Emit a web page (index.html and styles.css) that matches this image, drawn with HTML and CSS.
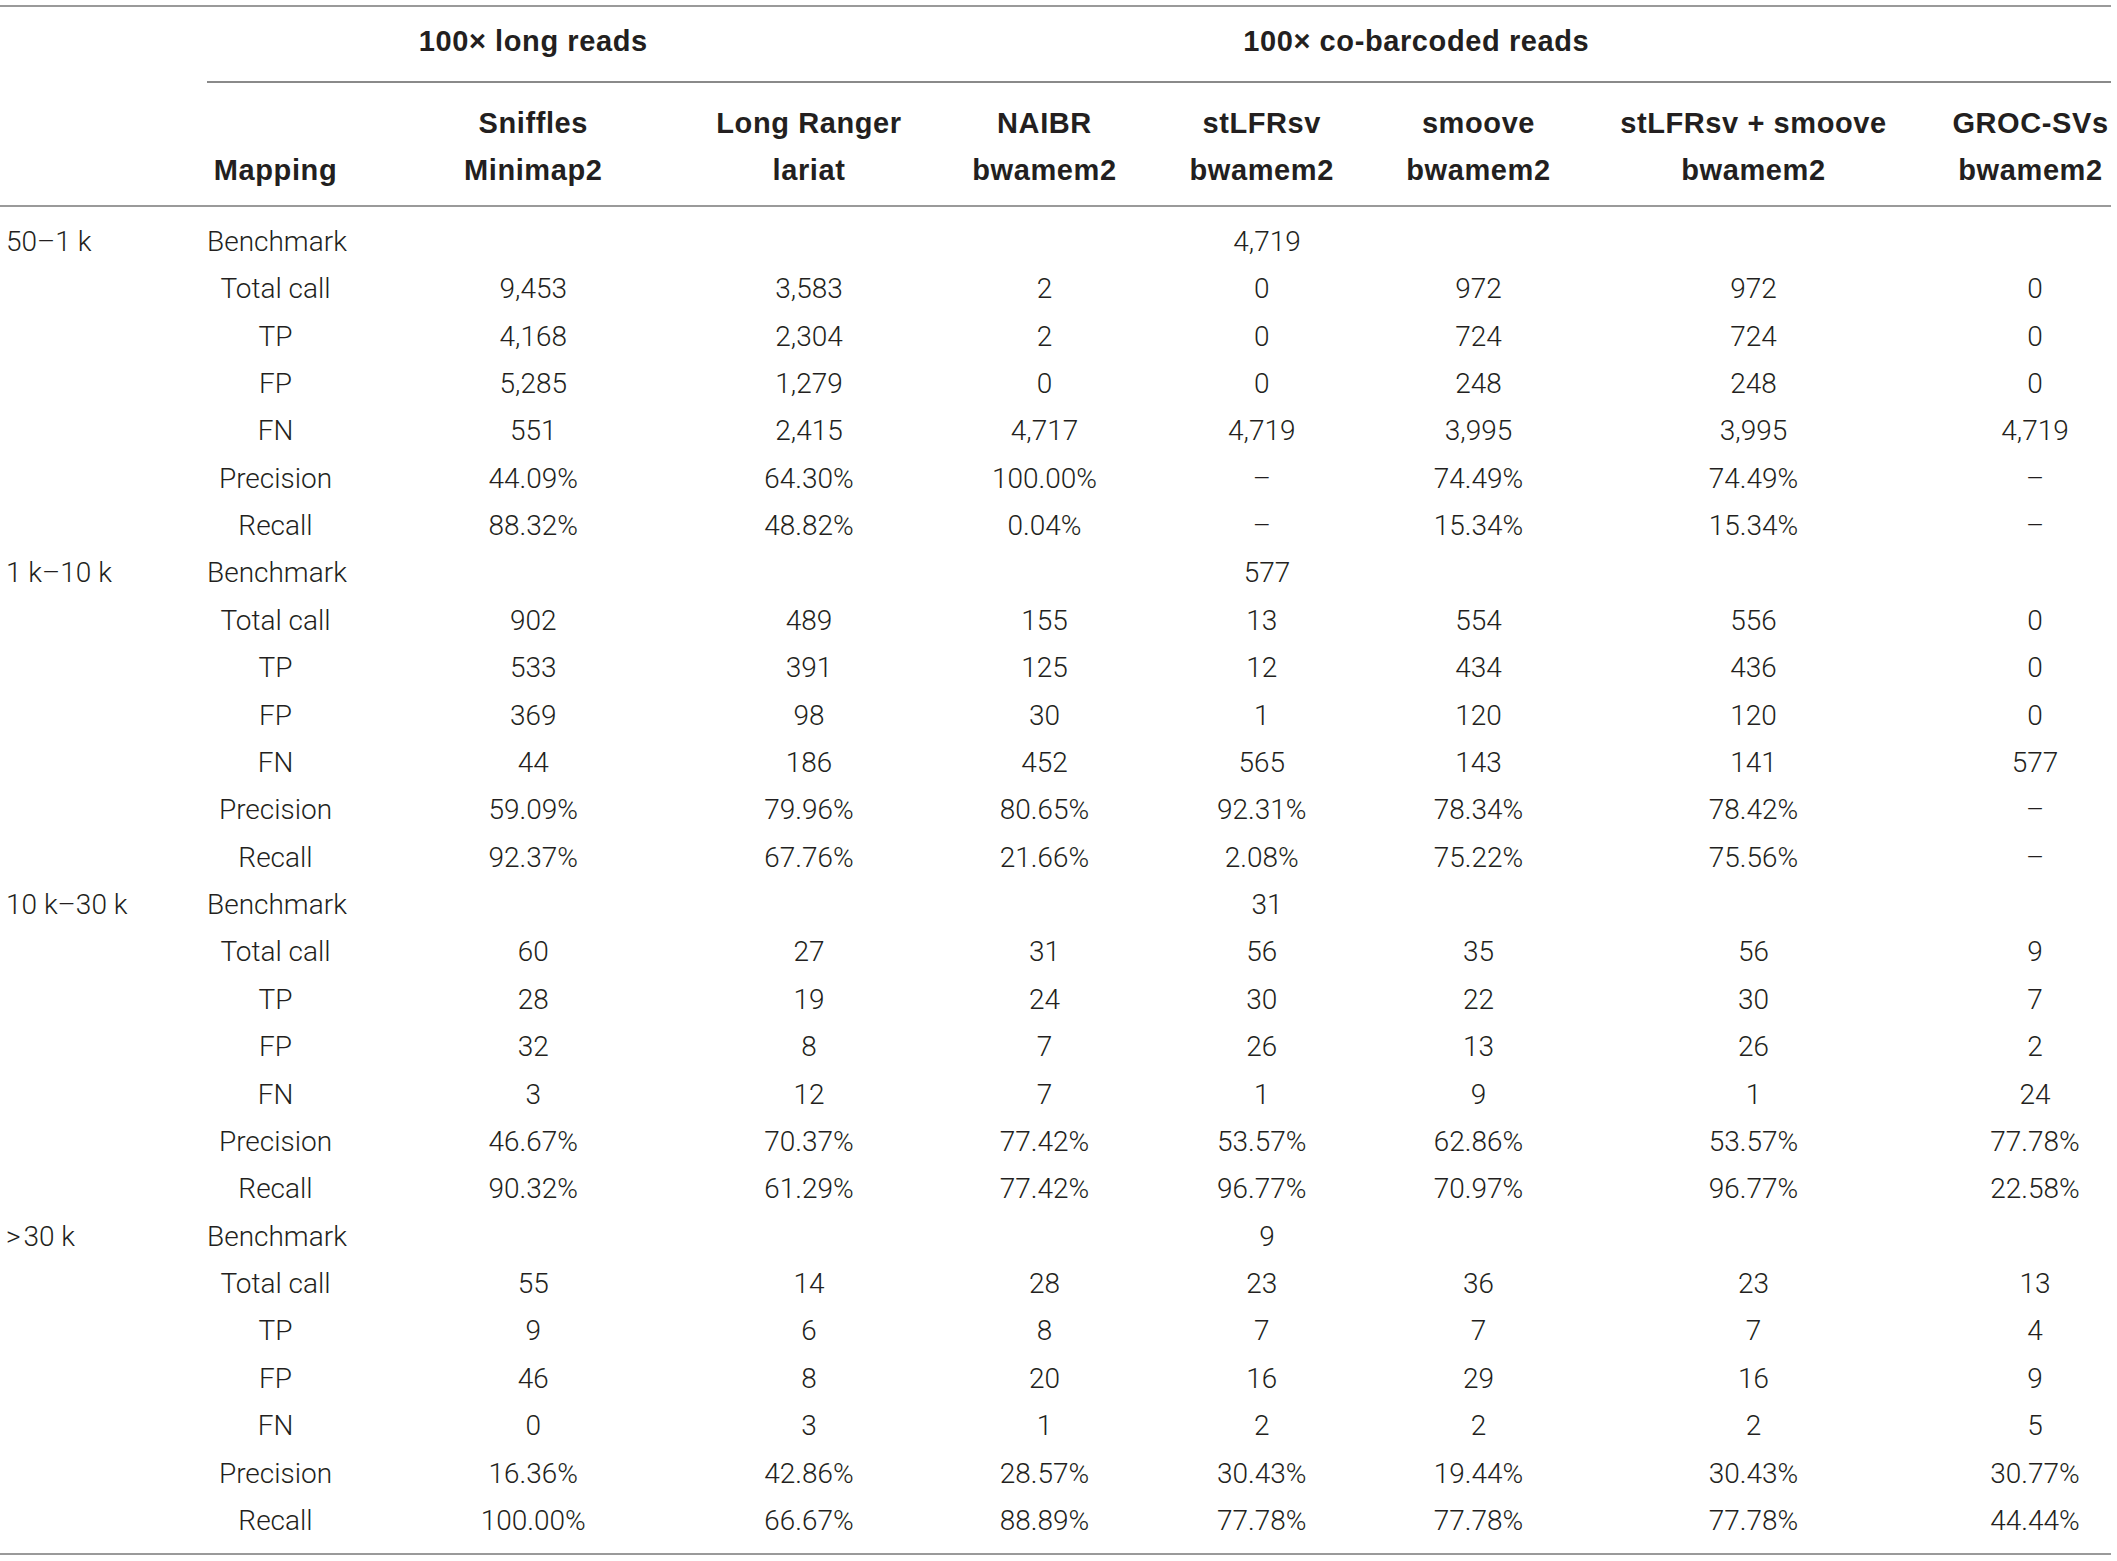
FILE: index.html
```html
<!DOCTYPE html>
<html lang="en">
<head>
  <meta charset="UTF-8" />
  <title>SV calling benchmark</title>
  <link rel="stylesheet" href="styles.css">
</head>
<body>
  <table class="tabela">
    <colgroup>
      <col class="c-faixa">
      <col class="c-map">
      <col class="c-sniffles">
      <col class="c-ranger">
      <col class="c-naibr">
      <col class="c-stlfr">
      <col class="c-smoove">
      <col class="c-combo">
      <col class="c-groc">
    </colgroup>
    <thead>
      <tr class="grupo">
        <th></th>
        <th class="com-linha"></th>
        <th class="com-linha">100× long reads</th>
        <th class="com-linha" colspan="6">100× co-barcoded reads</th>
      </tr>
      <tr class="colunas">
        <th></th>
        <th class="mapeamento">Mapping</th>
        <th>Sniffles<br>Minimap2</th>
        <th>Long Ranger<br>lariat</th>
        <th>NAIBR<br>bwamem2</th>
        <th>stLFRsv<br>bwamem2</th>
        <th>smoove<br>bwamem2</th>
        <th>stLFRsv + smoove<br>bwamem2</th>
        <th>GROC-SVs<br>bwamem2</th>
      </tr>
    </thead>
    <tbody id="corpo">
      <!-- linhas montadas pelo script -->
    </tbody>
  </table>

  <script>
    const secoes = [
      {
        faixa: '50–1 k', benchmark: '4,719',
        linhas: [
          ['Total call', '9,453', '3,583', '2', '0', '972', '972', '0'],
          ['TP', '4,168', '2,304', '2', '0', '724', '724', '0'],
          ['FP', '5,285', '1,279', '0', '0', '248', '248', '0'],
          ['FN', '551', '2,415', '4,717', '4,719', '3,995', '3,995', '4,719'],
          ['Precision', '44.09%', '64.30%', '100.00%', '–', '74.49%', '74.49%', '–'],
          ['Recall', '88.32%', '48.82%', '0.04%', '–', '15.34%', '15.34%', '–']
        ]
      },
      {
        faixa: '1 k–10 k', benchmark: '577',
        linhas: [
          ['Total call', '902', '489', '155', '13', '554', '556', '0'],
          ['TP', '533', '391', '125', '12', '434', '436', '0'],
          ['FP', '369', '98', '30', '1', '120', '120', '0'],
          ['FN', '44', '186', '452', '565', '143', '141', '577'],
          ['Precision', '59.09%', '79.96%', '80.65%', '92.31%', '78.34%', '78.42%', '–'],
          ['Recall', '92.37%', '67.76%', '21.66%', '2.08%', '75.22%', '75.56%', '–']
        ]
      },
      {
        faixa: '10 k–30 k', benchmark: '31',
        linhas: [
          ['Total call', '60', '27', '31', '56', '35', '56', '9'],
          ['TP', '28', '19', '24', '30', '22', '30', '7'],
          ['FP', '32', '8', '7', '26', '13', '26', '2'],
          ['FN', '3', '12', '7', '1', '9', '1', '24'],
          ['Precision', '46.67%', '70.37%', '77.42%', '53.57%', '62.86%', '53.57%', '77.78%'],
          ['Recall', '90.32%', '61.29%', '77.42%', '96.77%', '70.97%', '96.77%', '22.58%']
        ]
      },
      {
        faixa: '>\u200a30 k', benchmark: '9',
        linhas: [
          ['Total call', '55', '14', '28', '23', '36', '23', '13'],
          ['TP', '9', '6', '8', '7', '7', '7', '4'],
          ['FP', '46', '8', '20', '16', '29', '16', '9'],
          ['FN', '0', '3', '1', '2', '2', '2', '5'],
          ['Precision', '16.36%', '42.86%', '28.57%', '30.43%', '19.44%', '30.43%', '30.77%'],
          ['Recall', '100.00%', '66.67%', '88.89%', '77.78%', '77.78%', '77.78%', '44.44%']
        ]
      }
    ];

    const corpo = document.getElementById('corpo');

    function celula(texto, classe, colspan) {
      const td = document.createElement('td');
      td.textContent = texto;
      if (classe) td.className = classe;
      if (colspan) td.colSpan = colspan;
      return td;
    }

    secoes.forEach(secao => {
      const tr = document.createElement('tr');
      tr.appendChild(celula(secao.faixa, 'faixa'));
      tr.appendChild(celula('Benchmark', 'rotulo'));
      tr.appendChild(celula(secao.benchmark, '', 7));
      corpo.appendChild(tr);

      secao.linhas.forEach(linha => {
        const tr = document.createElement('tr');
        tr.appendChild(celula('', 'faixa'));
        tr.appendChild(celula(linha[0], 'rotulo'));
        linha.slice(1).forEach(valor => tr.appendChild(celula(valor)));
        corpo.appendChild(tr);
      });
    });
  </script>
</body>
</html>
```

FILE: styles.css
```css
:root {
  --cor-texto: #231f20;
  --cor-linha: #9a9a9a;
}

* {
  margin: 0;
  padding: 0;
  box-sizing: border-box;
}

body {
  font-family: Roboto, 'Liberation Sans', sans-serif;
  font-weight: 300;
  font-size: 28px;
  color: var(--cor-texto);
  background-color: #fff;
}

.tabela {
  width: 2111px;
  margin-top: 5px;
  table-layout: fixed;
  border-collapse: separate;
  border-spacing: 0;
  border-top: 2px solid var(--cor-linha);
  border-bottom: 2px solid var(--cor-linha);
}

/* larguras das colunas, tiradas do centro de cada coluna */
.c-faixa { width: 207px; }
.c-map { width: 177px; }
.c-sniffles { width: 298.5px; }
.c-ranger { width: 253px; }
.c-naibr { width: 218px; }
.c-stlfr { width: 216.5px; }
.c-smoove { width: 217px; }
.c-combo { width: 333px; }
.c-groc { width: 191px; }

.tabela th,
.tabela td {
  text-align: center;
  white-space: nowrap;
  font-variant-numeric: tabular-nums;
}

.tabela th {
  font-family: 'Liberation Sans', Arial, sans-serif;
  font-weight: 700;
  font-size: 29px;
  letter-spacing: 0.6px;
  line-height: 47px;
}

.tabela th:nth-child(2),
.tabela td:nth-child(2) {
  padding-right: 40px;
}

.tabela th:last-child,
.tabela td:last-child {
  padding-left: 39px;
}

.grupo th {
  padding-top: 11px;
  padding-bottom: 16px;
}

.grupo .com-linha {
  border-bottom: 2px solid #8a8a8a;
}

.grupo th:nth-child(2) {
  padding-right: 0;
}

.colunas th {
  padding-top: 16.5px;
  padding-bottom: 11px;
  vertical-align: bottom;
  border-bottom: 2px solid var(--cor-linha);
}

.colunas th:last-child {
  padding-left: 30px;
}

.tabela td {
  line-height: 47.37px;
}

.tabela td.faixa {
  text-align: left;
  padding-left: 6px;
}

tbody tr:first-child td {
  padding-top: 11.3px;
}

tbody tr:last-child td {
  padding-bottom: 9px;
}
```
